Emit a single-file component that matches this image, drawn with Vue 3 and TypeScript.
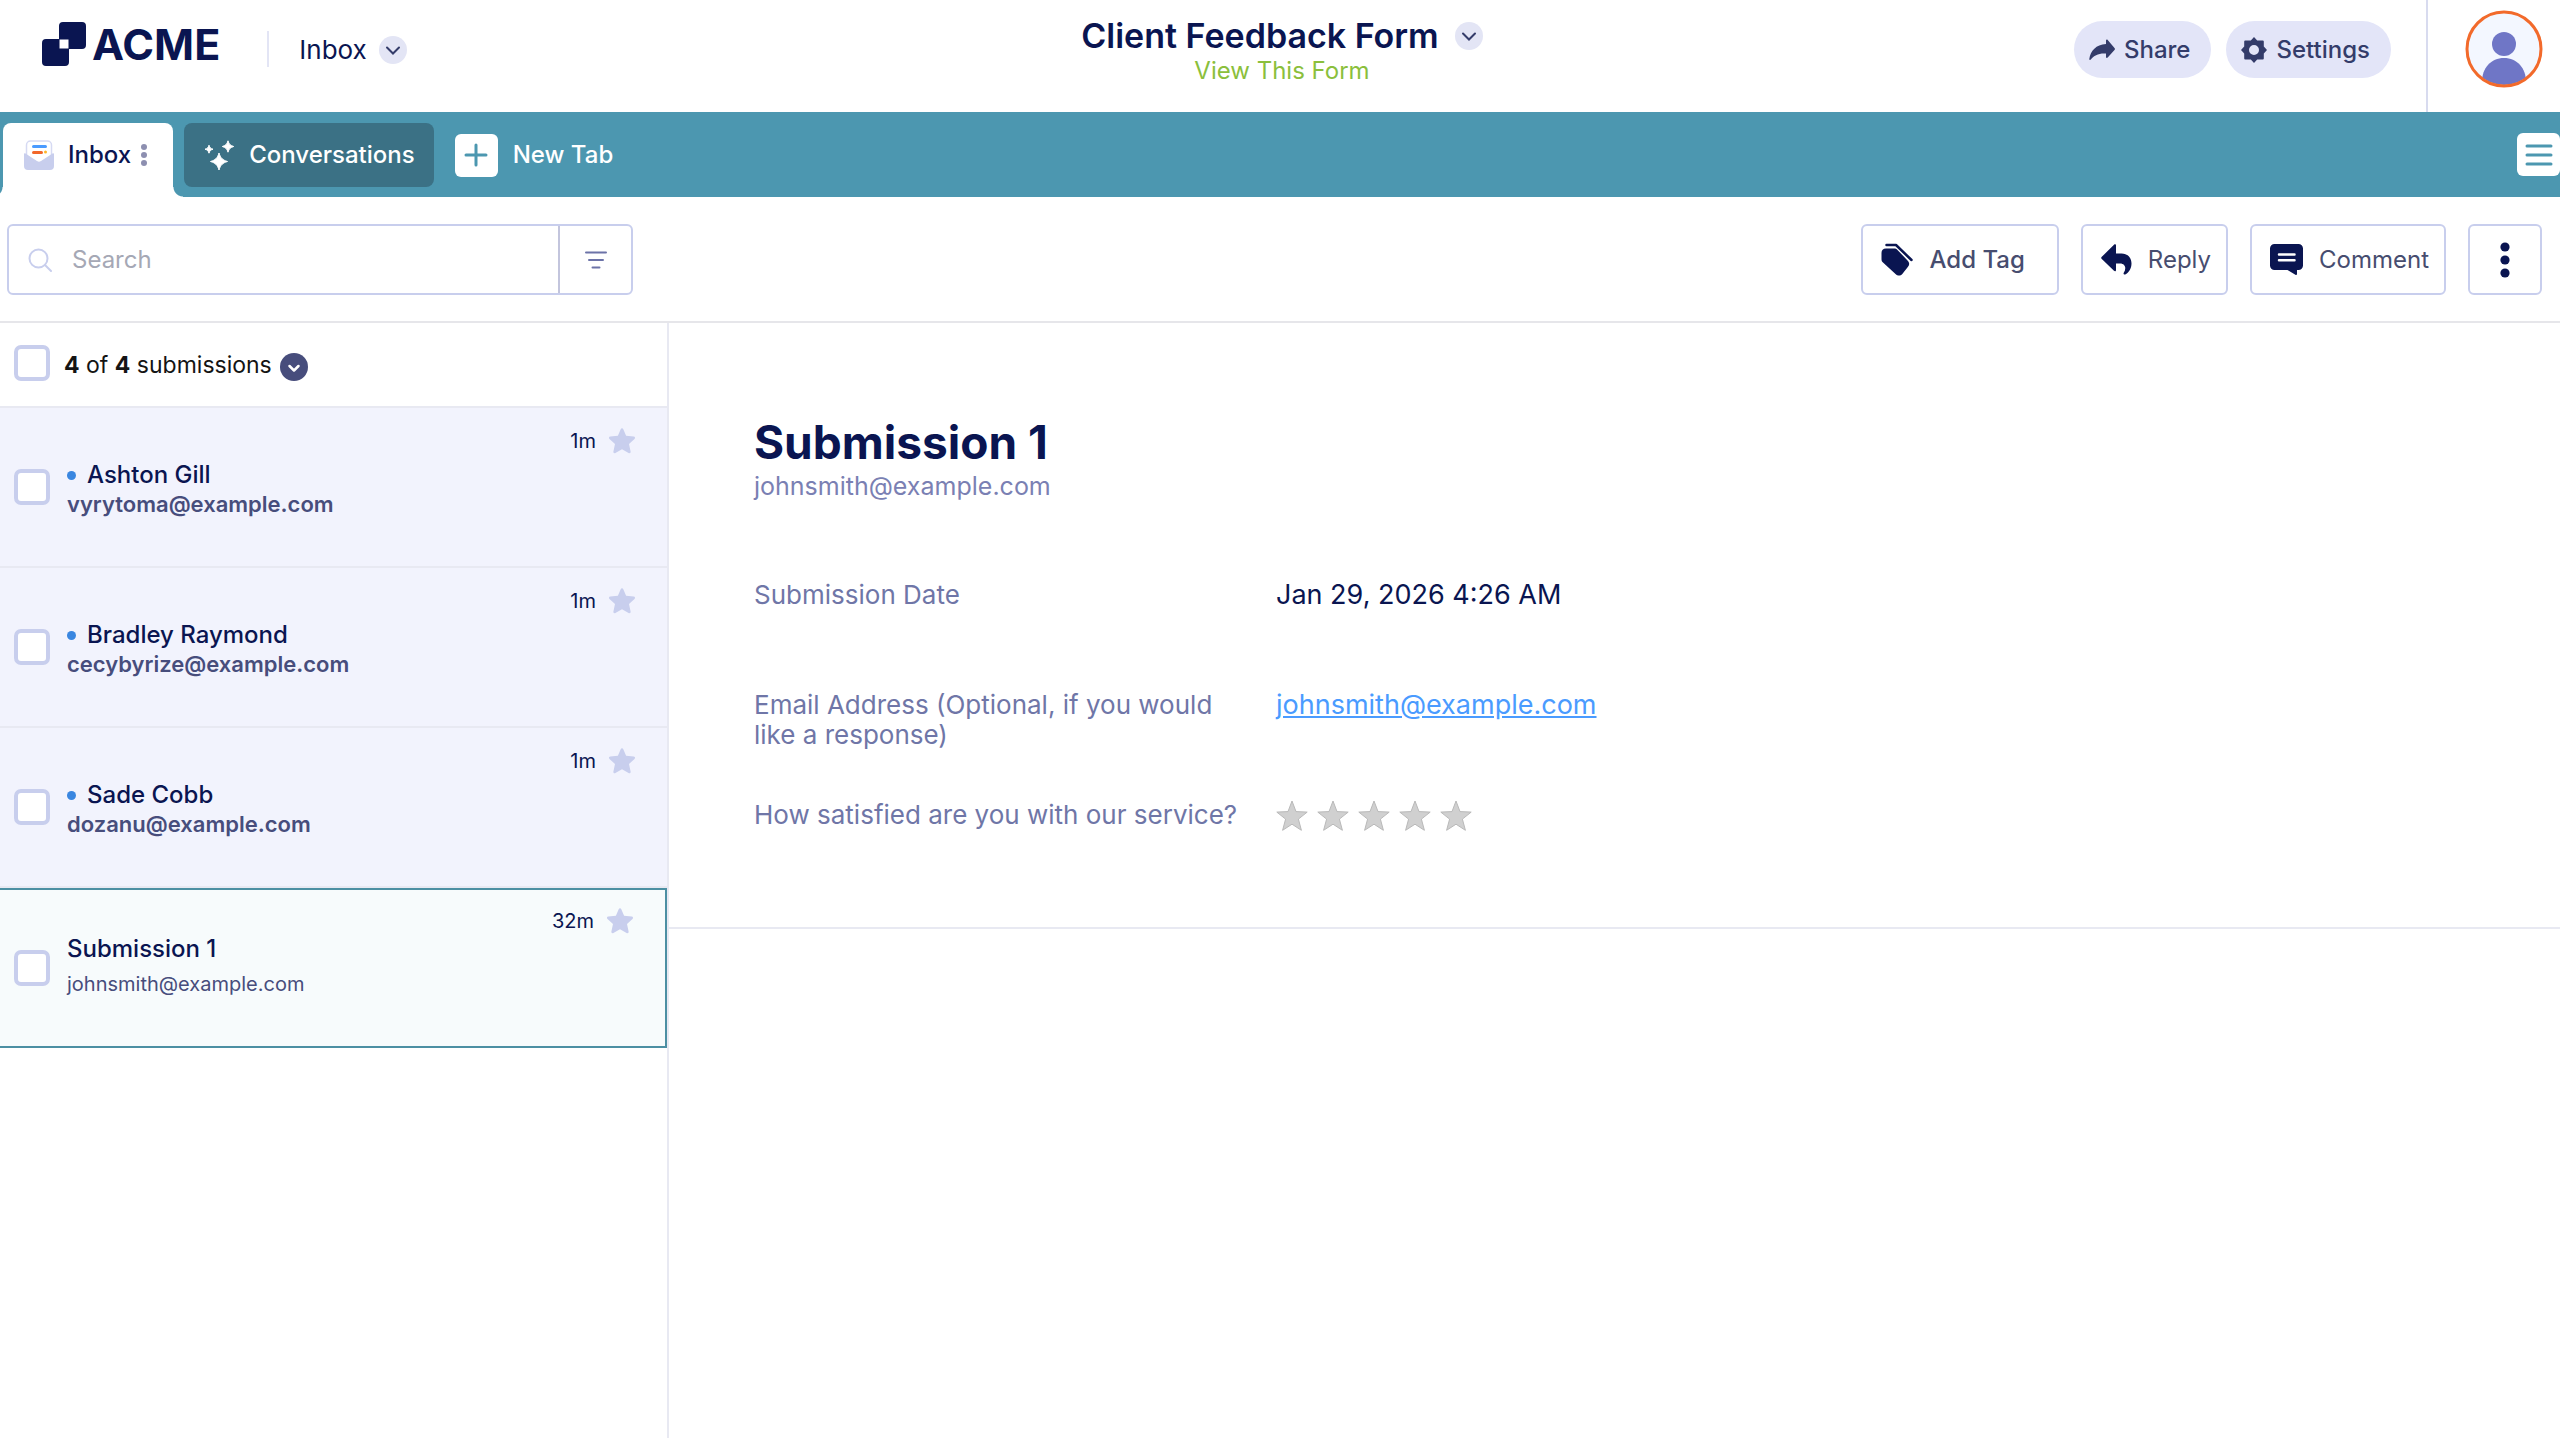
<script setup lang="ts">
import { ref } from 'vue'

interface Submission {
  id: number
  name: string
  email: string
  age: string
  unread: boolean
}

const submissions: Submission[] = [
  { id: 1, name: 'Ashton Gill', email: 'vyrytoma@example.com', age: '1m', unread: true },
  { id: 2, name: 'Bradley Raymond', email: 'cecybyrize@example.com', age: '1m', unread: true },
  { id: 3, name: 'Sade Cobb', email: 'dozanu@example.com', age: '1m', unread: true },
  { id: 4, name: 'Submission 1', email: 'johnsmith@example.com', age: '32m', unread: false },
]

const selectedId = ref(4)
const checked = ref<number[]>([])
const query = ref('')
const starPath =
  'M14 1.2c.6 0 1 .4 1.3 1l2.8 6.6 7.6.8c1.400.1 1.800 1.500.8 2.400l-5.500 4.900 1.600 7.600c.300 1.300-.9 2.100-2 1.500L14 22.200l-6.600 3.800c-1.100.6-2.300-.2-2-1.500L7 16.900 1.500 12c-1-.9-.6-2.300.8-2.400l7.600-.8 2.800-6.600c.3-.6.7-1 1.300-1z'
</script>

<template>
  <div class="page">
    <header class="top">
      <div class="top-left">
        <a class="logo" href="#" aria-label="ACME">
          <svg width="44" height="44" viewBox="0 0 44 44" aria-hidden="true">
            <path fill="#0a1551" fill-rule="evenodd" d="M21 0h19a4 4 0 0 1 4 4v19a4 4 0 0 1-4 4H27v13a4 4 0 0 1-4 4H4a4 4 0 0 1-4-4V21a4 4 0 0 1 4-4h13V4a4 4 0 0 1 4-4zM17.500 17.500v9h9v-9z" />
          </svg>
          <span>ACME</span>
        </a>
        <span class="rule"></span>
        <button class="crumb" type="button">
          Inbox
          <svg width="28" height="28" viewBox="0 0 28 28" aria-hidden="true">
            <circle cx="14" cy="14" r="14" fill="#e3e5f5" />
            <path d="M8 11.500l6 6 6-6" fill="none" stroke="#343c6a" stroke-width="2" stroke-linecap="round" />
          </svg>
        </button>
      </div>

      <div class="top-mid">
        <h1>
          Client Feedback Form
          <button type="button" aria-label="Form menu">
            <svg width="28" height="28" viewBox="0 0 28 28" aria-hidden="true">
              <circle cx="14" cy="14" r="14" fill="#e3e5f5" />
              <path d="M8 11.500l6 6 6-6" fill="none" stroke="#343c6a" stroke-width="2" stroke-linecap="round" />
            </svg>
          </button>
        </h1>
        <a class="view" href="#">View This Form</a>
      </div>

      <div class="top-right">
        <button class="pill" type="button">
          <svg width="26" height="26" viewBox="0 0 26 26" aria-hidden="true">
            <path fill="#343c6a" d="M17 3.500c0-1 1-1.300 1.700-.6l6.800 8c.6.700.6 1.400 0 2.100l-6.800 7.600c-.7.700-1.700.4-1.700-.6v-3.500C9.500 16 5 18.500 1.800 22.500c-.6.700-1.700.4-1.500-.6C1.500 14 7 7.500 17 7z" />
          </svg>
          Share
        </button>
        <button class="pill" type="button">
          <svg width="26" height="26" viewBox="0 0 26 26" aria-hidden="true">
            <path fill="#343c6a" fill-rule="evenodd" d="M13 0l3.200 3.400h5.600a1 1 0 0 1 1 1v5.200L26 13l-3.200 3.400v5.200a1 1 0 0 1-1 1h-5.600L13 26l-3.200-3.400H4.200a1 1 0 0 1-1-1v-5.200L0 13l3.200-3.400V4.400a1 1 0 0 1 1-1h5.600zM13 8a5 5 0 1 0 0 10 5 5 0 0 0 0-10z" />
          </svg>
          Settings
        </button>
        <button class="avatar" type="button" aria-label="Account">
          <svg width="78" height="78" viewBox="0 0 78 78" aria-hidden="true">
            <clipPath id="face"><circle cx="39" cy="39" r="36" /></clipPath>
            <circle cx="39" cy="39" r="37" fill="#f3f7ff" />
            <g fill="#6f76c6" clip-path="url(#face)">
              <circle cx="39" cy="34" r="12" />
              <path d="M17 72c0-14 9-24 22-24s22 10 22 24v6H17z" />
            </g>
            <circle cx="39" cy="39" r="37" fill="none" stroke="#f26a2b" stroke-width="3" />
          </svg>
        </button>
      </div>
    </header>

    <nav class="tabs" aria-label="Views">
      <div class="tab active">
        <svg width="30" height="31" viewBox="0 0 30 31" aria-hidden="true">
          <rect x="2.500" y="1" width="25" height="24" rx="4" fill="#fff" stroke="#d6daf3" stroke-width="1.500" />
          <rect x="8" y="5" width="15" height="3" rx="1.500" fill="#4a9bff" />
          <rect x="8" y="11" width="11" height="3" rx="1.500" fill="#f2672a" />
          <circle cx="21.500" cy="12" r="1.500" fill="#ffb629" />
          <path fill="#c8ceed" d="M0 14c0-1 .8-1 1.500-.5L13 21c1.400.9 2.600.9 4 0l11.500-7.500c.7-.5 1.500-.5 1.500.5v12a4 4 0 0 1-4 4H4a4 4 0 0 1-4-4z" />
        </svg>
        <a class="tab-name" href="#" aria-current="page">Inbox</a>
        <button type="button" aria-label="Tab options">
          <svg width="6" height="22" viewBox="0 0 6 22" fill="#8d8fb0" aria-hidden="true">
            <circle cx="3" cy="3" r="3" /><circle cx="3" cy="11" r="3" /><circle cx="3" cy="19" r="3" />
          </svg>
        </button>
      </div>
      <a class="tab dark" href="#">
        <svg width="31" height="31" viewBox="0 0 31 31" fill="#fff" stroke="#fff" stroke-width="1" stroke-linejoin="round" aria-hidden="true">
          <path d="M15 13c1.500 5 3.500 7 8.500 8.500-5 1.500-7 3.500-8.500 8.500-1.500-5-3.500-7-8.500-8.500 5-1.500 7-3.500 8.500-8.500z" />
          <path d="M24 .8c1 3.400 2 4.500 5.700 5.700C26 7.700 25 8.800 24 12.200 23 8.800 22 7.700 18.300 6.500 22 5.300 23 4.200 24 .8z" />
          <path d="M5 5.200c.8 2.500 1.500 3.200 4 4-2.500.8-3.200 1.500-4 4-.8-2.500-1.500-3.200-4-4 2.500-.8 3.200-1.500 4-4z" />
        </svg>
        Conversations
      </a>
      <button class="new" type="button">
        <span class="tile">
          <svg width="26" height="26" viewBox="0 0 26 26" stroke="#4c97b0" stroke-width="3" stroke-linecap="round" aria-hidden="true">
            <path d="M13 3v20M3 13h20" />
          </svg>
        </span>
        New Tab
      </button>
      <button class="tile menu" type="button" aria-label="Menu">
        <svg width="28" height="22" viewBox="0 0 28 22" stroke="#4c97b0" stroke-width="3" stroke-linecap="round" aria-hidden="true">
          <path d="M2 2h24M2 11h24M2 20h24" />
        </svg>
      </button>
    </nav>

    <div class="tools">
      <form class="search" role="search" @submit.prevent>
        <svg width="24" height="24" viewBox="0 0 24 24" fill="none" stroke="#c8ceed" stroke-width="2" stroke-linecap="round" aria-hidden="true">
          <circle cx="10.500" cy="10.500" r="9" /><path d="M17 17l6 6" />
        </svg>
        <input v-model="query" type="text" placeholder="Search" aria-label="Search" />
        <button type="button" aria-label="Filter">
          <svg width="22" height="18" viewBox="0 0 22 18" stroke="#6c73a8" stroke-width="2" stroke-linecap="round" aria-hidden="true">
            <path d="M1 1.500h20M4 9h14M7.500 16.500h7" />
          </svg>
        </button>
      </form>

      <div class="actions">
        <button class="box tag" type="button">
          <svg width="32" height="33" viewBox="0 0 32 33" aria-hidden="true">
            <path fill="#0a1551" d="M5 5.500h8c1.500 0 2.500.4 3.500 1.400L26.500 17.500c2 2 2.300 4.500.3 6.500l-5.500 7c-2 2.200-4.600 2-6.800 0L2 19.500C.8 18.500.5 17.500.5 16v-6C.5 7 2 5.500 5 5.500z" />
            <path fill="none" stroke="#0a1551" stroke-width="2.500" stroke-linecap="round" stroke-linejoin="round" d="M5.500 2H15l15.500 15" />
          </svg>
          Add Tag
        </button>
        <button class="box" type="button">
          <svg width="31" height="31" viewBox="0 0 31 31" aria-hidden="true">
            <path fill="#0a1551" d="M13 .8c1-.9 2-.5 2 .8v8h5.500C27 9.600 30.500 14 30.500 19.500c0 5-2.500 8.800-5.800 10.800-1.500.8-2.800-.3-1.800-1.700 2.600-4 1.600-9.100-3.900-9.100h-4V26c0 1.300-1 1.700-2 .8L.8 15c-.8-.8-.8-1.400 0-2.200z" />
          </svg>
          Reply
        </button>
        <button class="box" type="button">
          <svg width="33" height="31" viewBox="0 0 33 31" aria-hidden="true">
            <path fill="#0a1551" d="M4.500 0h24A4.500 4.500 0 0 1 33 4.500v17a4.500 4.500 0 0 1-4.500 4.500H27v4c0 .9-.8 1.200-1.600.7L17.500 26h-13A4.500 4.500 0 0 1 0 21.500v-17A4.500 4.500 0 0 1 4.500 0z" />
            <path stroke="#fff" stroke-width="2.500" stroke-linecap="round" d="M9 10.500h15.500M9 16.200h15.500" />
          </svg>
          Comment
        </button>
        <button class="box more" type="button" aria-label="More actions">
          <svg width="10" height="36" viewBox="0 0 10 36" fill="#0a1551" aria-hidden="true">
            <circle cx="5" cy="5" r="4.600" /><circle cx="5" cy="18" r="4.600" /><circle cx="5" cy="31" r="4.600" />
          </svg>
        </button>
      </div>
    </div>

    <div class="body">
      <aside class="list">
        <div class="list-head">
          <input type="checkbox" aria-label="Select all submissions" />
          <span><b>4</b> of <b>4</b> submissions</span>
          <button type="button" aria-label="Selection options">
            <svg width="28" height="28" viewBox="0 0 28 28" aria-hidden="true">
              <circle cx="14" cy="14" r="14" fill="#474d7c" />
              <path d="M9.500 13l4.500 4.500L18.500 13" fill="none" stroke="#fff" stroke-width="2.500" stroke-linecap="round" stroke-linejoin="round" />
            </svg>
          </button>
        </div>
        <ul>
          <li
            v-for="s in submissions"
            :key="s.id"
            class="item"
            :class="{ unread: s.unread, selected: s.id === selectedId }"
            @click="selectedId = s.id"
          >
            <input v-model="checked" type="checkbox" :value="s.id" :aria-label="'Select ' + s.name" />
            <div class="who">
              <strong>{{ s.name }}</strong>
              <span>{{ s.email }}</span>
            </div>
            <div class="meta">
              <time>{{ s.age }}</time>
              <button type="button" aria-label="Star">
                <svg width="28" height="28" viewBox="0 0 28 28" fill="#c8ceed" aria-hidden="true"><path :d="starPath" /></svg>
              </button>
            </div>
          </li>
        </ul>
      </aside>

      <main>
        <section class="detail">
          <h2>Submission 1</h2>
          <p>johnsmith@example.com</p>
          <dl>
            <div>
              <dt>Submission Date</dt>
              <dd>Jan 29, 2026 4:26 AM</dd>
            </div>
            <div>
              <dt>Email Address (Optional, if you would like a response)</dt>
              <dd><a href="#">johnsmith@example.com</a></dd>
            </div>
            <div>
              <dt>How satisfied are you with our service?</dt>
              <dd class="stars" role="img" aria-label="No rating">
                <svg v-for="n in 5" :key="n" width="32" height="32" viewBox="0 0 32 32" aria-hidden="true">
                  <path d="M16 1l4 10.600 11.200.5-8.800 7 3 11.200L16 24.200l-9.400 6.100 3-11.200-8.800-7L12 11.600z" fill="#d0d0d0" stroke="#b9b9b9" stroke-width="1" />
                </svg>
              </dd>
            </div>
          </dl>
        </section>
      </main>
    </div>
  </div>
</template>

<style>
body {
  background: #fff;
}
</style>

<style scoped>
* {
  box-sizing: border-box;
}
.page {
  display: flex;
  flex-direction: column;
  min-height: 100vh;
  font-family: Inter, 'Liberation Sans', sans-serif;
  font-size: 24px;
  line-height: 30px;
  color: #0a1551;
}
button,
input {
  margin: 0;
  font: inherit;
  color: inherit;
}
button {
  padding: 0;
  border: 0;
  background: none;
}
a {
  color: inherit;
  text-decoration: none;
}
svg {
  display: block;
  flex: none;
}
h1,
h2,
p,
ul,
dl,
dd {
  margin: 0;
  padding: 0;
}

.top {
  display: grid;
  grid-template-columns: 1fr auto 1fr;
  height: 112px;
}
.top-left {
  display: flex;
  align-items: flex-start;
  padding: 22px 0 0 42px;
}
.logo {
  display: flex;
  align-items: center;
  gap: 6px;
  height: 44px;
  font-size: 43px;
  font-weight: 700;
}
.rule {
  width: 2px;
  height: 36px;
  margin: 9px 30px 0 47px;
  background: #e3e5f5;
}
.crumb {
  display: flex;
  align-items: center;
  gap: 12px;
  height: 56px;
  font-size: 26px;
}
.top-mid {
  display: flex;
  flex-direction: column;
  align-items: center;
  padding: 16px 0 0 4px;
}
h1 {
  display: flex;
  align-items: center;
  gap: 16px;
  font-size: 34px;
  font-weight: 600;
  line-height: 40px;
}
.view {
  color: #8bbf3c;
}
.top-right {
  display: flex;
  justify-content: flex-end;
  align-items: flex-start;
  gap: 15px;
}
.pill {
  display: flex;
  align-items: center;
  gap: 9px;
  height: 57px;
  margin-top: 21px;
  padding: 0 21px 0 15px;
  border-radius: 29px;
  background: #e3e5f8;
  color: #343c6a;
  font-weight: 500;
}
.avatar {
  height: 112px;
  margin-left: 20px;
  padding: 10px 17px 24px 37px;
  border-left: 2px solid #d8dbef;
}

.tabs {
  display: flex;
  align-items: flex-start;
  height: 85px;
  padding: 11px 0 0 3px;
  background: #4c97b0;
  color: #fff;
  font-weight: 500;
}
.tab {
  display: flex;
  align-items: center;
  height: 64px;
  border-radius: 8px;
}
.tab.active {
  position: relative;
  gap: 10px;
  height: 74px;
  margin-right: 11px;
  padding: 0 26px 10px 21px;
  border-radius: 8px 8px 0 0;
  background: #fff;
  color: #0a1551;
}
.tab-name {
  margin-left: 4px;
}
.tab.active::before,
.tab.active::after {
  content: '';
  position: absolute;
  bottom: 0;
  width: 10px;
  height: 10px;
}
.tab.active::before {
  right: 100%;
  background: radial-gradient(circle at 0 0, #4c97b0 9px, #fff 10px);
}
.tab.active::after {
  left: 100%;
  background: radial-gradient(circle at 100% 0, #4c97b0 9px, #fff 10px);
}
.tab.dark {
  gap: 14px;
  padding: 0 19px 0 20px;
  background: #3b7185;
}
.new {
  display: flex;
  align-items: center;
  gap: 15px;
  height: 64px;
  margin-left: 21px;
}
.tile {
  display: flex;
  align-items: center;
  justify-content: center;
  width: 43px;
  height: 43px;
  border-radius: 6px;
  background: #fff;
}
.menu {
  margin: 10px 0 0 auto;
}

.tools {
  display: flex;
  justify-content: space-between;
  align-items: center;
  padding: 27px 18px 26px 7px;
  border-bottom: 2px solid #e6e6ea;
}
.search {
  display: flex;
  align-items: center;
  width: 626px;
  height: 71px;
  padding-left: 19px;
  border: 2px solid #c8ceed;
  border-radius: 6px;
}
.search input {
  flex: 1;
  min-width: 0;
  height: 100%;
  padding: 0 20px;
  border: 0;
  background: none;
}
.search input::placeholder {
  color: #a5a8b5;
  opacity: 1;
}
.search button {
  display: flex;
  align-items: center;
  justify-content: center;
  width: 73px;
  height: 100%;
  border-left: 2px solid #c3c5dd;
}
.actions {
  display: flex;
  gap: 22px;
}
.box {
  display: flex;
  align-items: center;
  gap: 16px;
  height: 71px;
  padding: 0 15px 0 18px;
  border: 2px solid #c8ceed;
  border-radius: 6px;
  background: #fff;
  color: #474d6f;
}
.box.tag {
  padding-right: 32px;
  font-weight: 500;
}
.box.more {
  justify-content: center;
  width: 74px;
  padding: 0;
}

.body {
  display: flex;
  flex: 1;
}
.list {
  flex: none;
  width: 669px;
  border-right: 2px solid #e8e9f2;
}
.list-head {
  display: flex;
  align-items: center;
  height: 85px;
  padding: 0 14px;
  border-bottom: 2px solid #e8e9f2;
  color: #141414;
}
.list-head span {
  margin: 0 8px 0 14px;
  font-size: 23px;
}
.list-head input {
  margin-bottom: 4px;
}
.list-head button {
  padding-top: 4px;
}
input[type='checkbox'] {
  appearance: none;
  flex: none;
  width: 36px;
  height: 36px;
  border: 4px solid #c8ceed;
  border-radius: 7px;
  background: #fff;
}
ul {
  list-style: none;
}
.item {
  display: flex;
  align-items: center;
  height: 160px;
  padding: 0 31px 0 14px;
  border-bottom: 2px solid #e8e9f2;
}
.unread {
  background: #f2f3fd;
}
.selected {
  border: 2px solid #4c8fa3;
  border-left: 0;
  background: #f7fbfc;
}
.who {
  display: flex;
  flex-direction: column;
  flex: 1;
  gap: 5px;
  padding: 0 0 4px 17px;
}
.who strong {
  display: flex;
  align-items: center;
  font-weight: 500;
}
.who span {
  font-size: 20px;
  color: #474d7c;
}
.unread .who {
  gap: 0;
  padding: 6px 0 0 17px;
}
.unread strong {
  line-height: 28px;
}
.unread strong::before {
  content: '';
  width: 9px;
  height: 9px;
  margin-right: 11px;
  border-radius: 50%;
  background: #3a86e0;
}
.unread .who span {
  font-size: 22px;
  font-weight: 600;
}
.meta {
  display: flex;
  align-items: center;
  align-self: flex-start;
  gap: 12px;
  padding-top: 18px;
  font-size: 20px;
}
.selected .meta {
  padding-top: 16px;
}

main {
  flex: 1;
}
.detail {
  padding: 91px 85px 17px;
  border-bottom: 2px solid #e8e9f2;
}
h2 {
  font-size: 46px;
  font-weight: 700;
  line-height: 56px;
}
.detail p {
  font-size: 25px;
  line-height: 32px;
  color: #7a80b3;
}
dl {
  padding-top: 78px;
}
dl > div {
  display: grid;
  grid-template-columns: 490px 1fr;
  gap: 32px;
  min-height: 110px;
}
dt {
  font-size: 26px;
  color: #6f76a7;
}
dd {
  font-size: 27px;
}
dd a {
  color: #4a9bff;
  text-decoration: underline;
}
.stars {
  display: flex;
  gap: 9px;
}
</style>
